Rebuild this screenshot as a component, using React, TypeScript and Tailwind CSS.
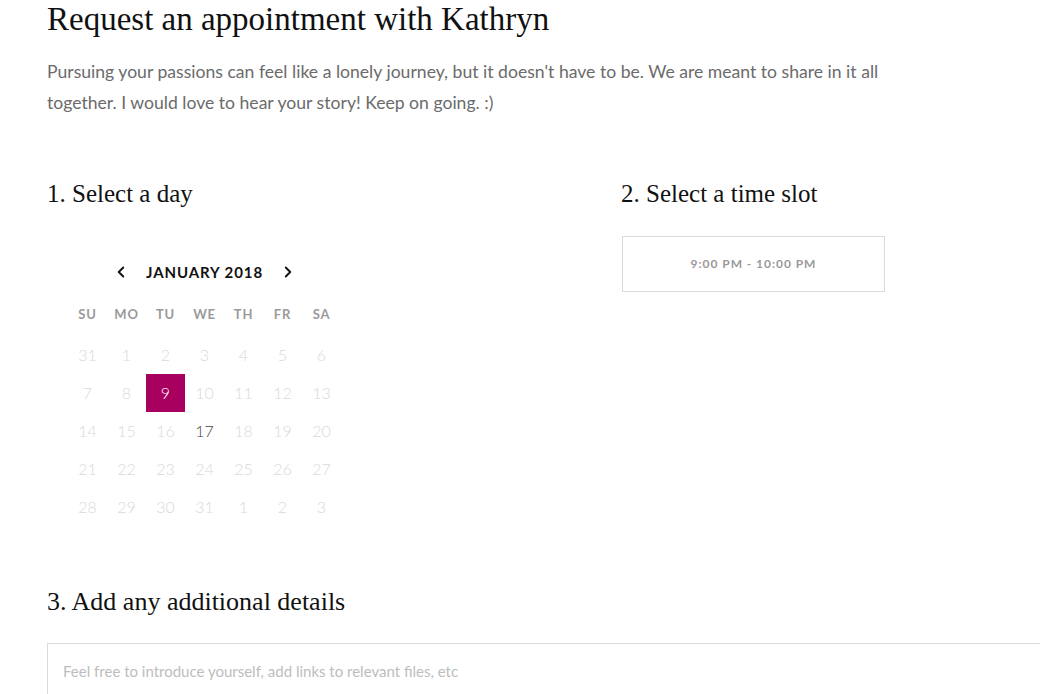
import { ChevronLeft, ChevronRight } from "lucide-react"

const serif = "font-['Liberation_Serif',Georgia,serif]"
const sans = "font-['Lato','Open_Sans',sans-serif]"

const days = ["SU", "MO", "TU", "WE", "TH", "FR", "SA"]

const weeks = [
  [31, 1, 2, 3, 4, 5, 6],
  [7, 8, 9, 10, 11, 12, 13],
  [14, 15, 16, 17, 18, 19, 20],
  [21, 22, 23, 24, 25, 26, 27],
  [28, 29, 30, 31, 1, 2, 3],
]

export default function App() {
  return (
    <div className={`bg-white min-h-[694px] overflow-hidden pl-[47px] ${sans}`}>
      <h1 className={`${serif} text-[33px] leading-[38px] text-[#111]`}>
        Request an appointment with Kathryn
      </h1>
      <p className="mt-[18px] text-[17.6px] leading-[31px] text-[#6b6b6b] w-[880px]">
        Pursuing your passions can feel like a lonely journey, but it doesn't have to be. We are meant to share in it all
        together. I would love to hear your story! Keep on going. :)
      </p>

      <div className="grid grid-cols-[574px_1fr] mt-[61px]">
        <div>
          <h2 className={`${serif} text-[25px] leading-[30px] text-[#111]`}>1. Select a day</h2>
          <Calendar />
        </div>
        <div>
          <h2 className={`${serif} text-[25px] leading-[30px] text-[#111]`}>2. Select a time slot</h2>
          <div className="mt-[27px] ml-[1px] w-[263px] h-[56px] border border-[#dcdcdc] flex items-center justify-center">
            <span className="text-[12px] font-bold tracking-[0.08em] text-[#9a9a9a]">9:00 PM - 10:00 PM</span>
          </div>
        </div>
      </div>

      <h2 className={`${serif} text-[26px] leading-[30px] text-[#111] mt-[61px]`}>3. Add any additional details</h2>
      <div className="mt-[26px] border border-[#dcdcdc] border-r-0 h-[80px] pl-[15px] pt-[15px]">
        <span className="text-[15px] text-[#bdbdbd]">Feel free to introduce yourself, add links to relevant files, etc</span>
      </div>
    </div>
  )
}

function Calendar() {
  return (
    <div className="ml-[21px] mt-[51px] w-[273px]">
      <div className="flex items-center justify-center gap-[16px] h-[24px]">
        <ChevronLeft size={18} strokeWidth={2.5} className="text-[#111]" />
        <span className="text-[15px] font-bold tracking-[0.06em] text-[#111]">JANUARY 2018</span>
        <ChevronRight size={18} strokeWidth={2.5} className="text-[#111]" />
      </div>
      <div className="grid grid-cols-7 mt-[21px]">
        {days.map((d) => (
          <div key={d} className="h-[20px] flex items-center justify-center text-[13px] font-bold tracking-[0.06em] text-[#9a9a9a]">
            {d}
          </div>
        ))}
      </div>
      <div className="mt-[11px]">
        {weeks.map((w, i) => (
          <div key={i} className="grid grid-cols-7">
            {w.map((n, j) => {
              const selected = i === 1 && n === 9
              const active = i === 2 && n === 17
              return (
                <div
                  key={j}
                  className={
                    "h-[38px] flex items-center justify-center text-[16px] font-light " +
                    (selected
                      ? "bg-[#a8005e] text-white"
                      : active
                      ? "text-[#444]"
                      : "text-[#d9d9d9]")
                  }
                >
                  {n}
                </div>
              )
            })}
          </div>
        ))}
      </div>
    </div>
  )
}
